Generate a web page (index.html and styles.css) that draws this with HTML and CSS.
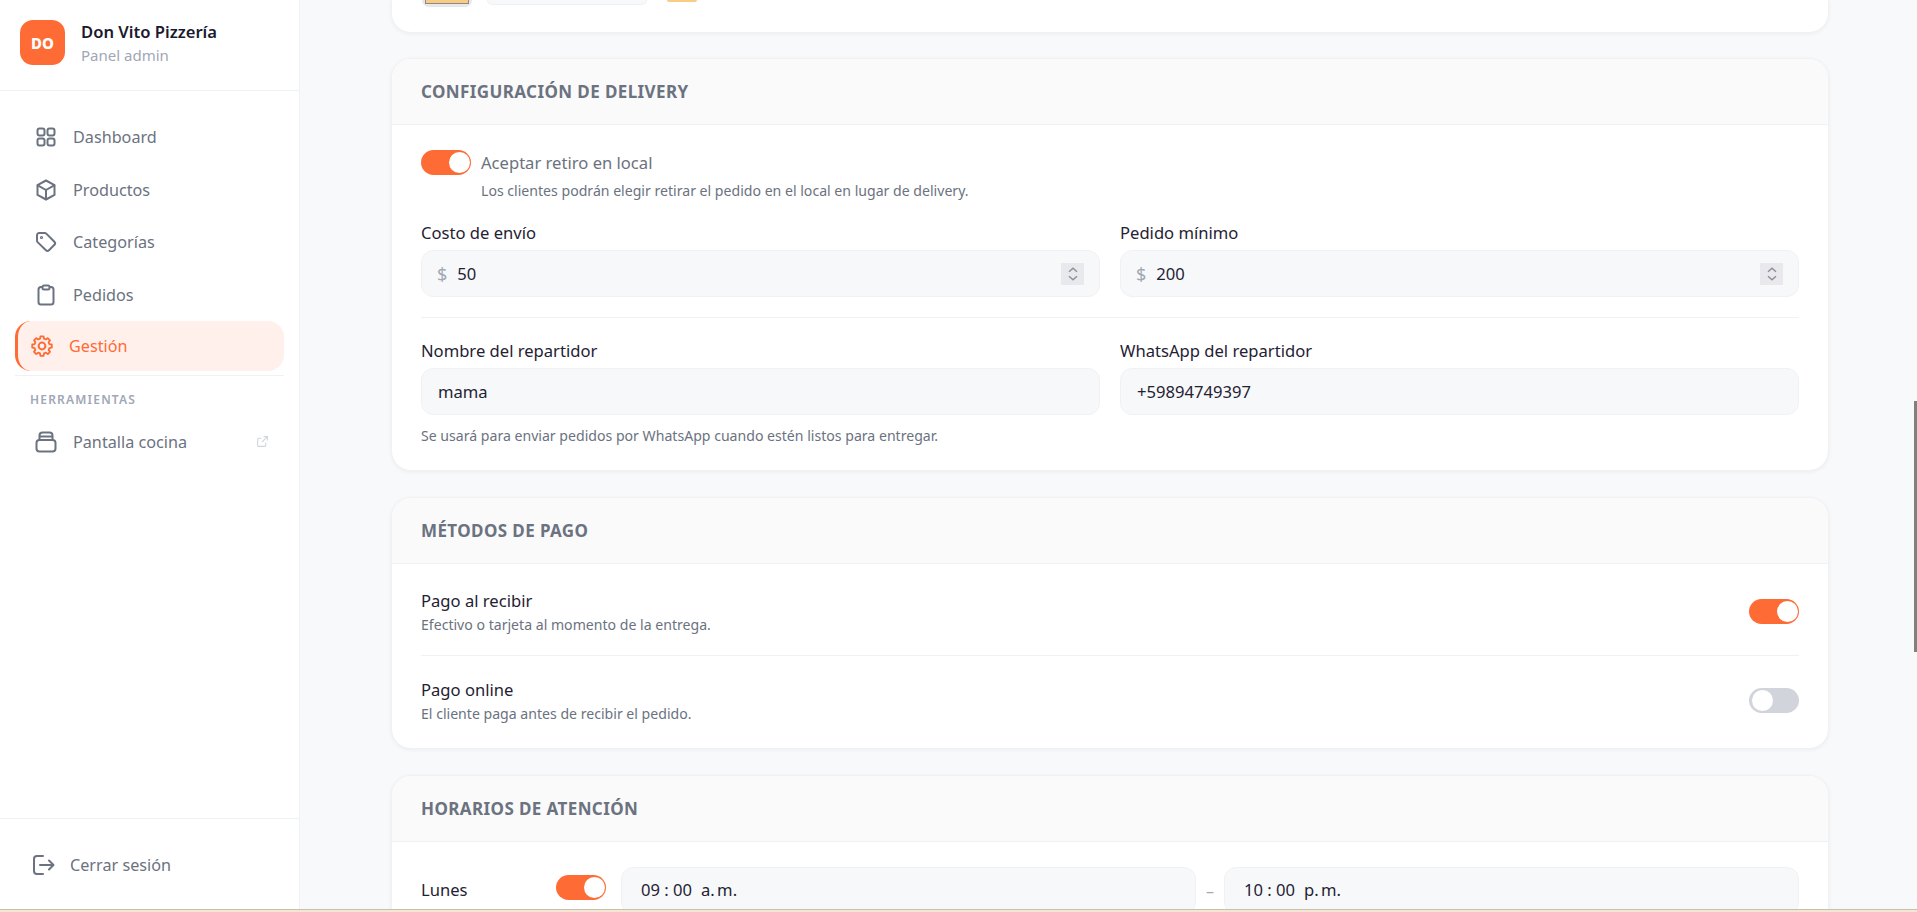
FILE: index.html
```html
<!DOCTYPE html>
<html lang="es">
<head>
  <meta charset="utf-8">
  <title>Gestión - Don Vito Pizzería</title>
  <link rel="stylesheet" href="styles.css">
</head>
<body>
<div class="app">
  <!-- Sidebar -->
  <aside class="sidebar">
    <div class="brand">
      <div class="brand-logo">DO</div>
      <div>
        <div class="brand-name">Don Vito Pizzería</div>
        <div class="brand-sub">Panel admin</div>
      </div>
    </div>
    <nav class="nav">
      <a class="nav-item">
        <svg class="nav-icon" viewBox="0 0 24 24"><rect x="3.5" y="3.500" width="7" height="7" rx="2"/><rect x="13.5" y="3.500" width="7" height="7" rx="2"/><rect x="3.5" y="13.500" width="7" height="7" rx="2"/><rect x="13.5" y="13.500" width="7" height="7" rx="2"/></svg>
        Dashboard
      </a>
      <a class="nav-item">
        <svg class="nav-icon" viewBox="0 0 24 24"><path d="M12 2.500l8.500 4.600v9.800L12 21.500l-8.500-4.600V7.100z"/><path d="M3.800 7.300L12 12l8.200-4.700M12 12v9.300"/></svg>
        Productos
      </a>
      <a class="nav-item">
        <svg class="nav-icon" viewBox="0 0 24 24"><path d="M3 5.200A2.200 2.200 0 0 1 5.200 3h5.600c.6 0 1.100.2 1.500.6l8.100 8.100a2.200 2.200 0 0 1 0 3.100l-5.400 5.400a2.200 2.200 0 0 1-3.100 0l-8.300-8.100A2.200 2.200 0 0 1 3 10.600z"/><circle cx="7.500" cy="7.500" r=".6"/></svg>
        Categorías
      </a>
      <a class="nav-item">
        <svg class="nav-icon" viewBox="0 0 24 24"><rect x="4.500" y="4" width="15" height="17.500" rx="2.500"/><rect x="8.500" y="2.500" width="7" height="4" rx="1.500" fill="#fff"/></svg>
        Pedidos
      </a>
      <a class="nav-item active">
        <svg class="nav-icon" viewBox="0 0 24 24"><path d="M10.300 3h3.400l.5 2.600 1.900.8 2.200-1.500 2.400 2.400-1.500 2.200.8 1.900 2.600.5v3.400l-2.600.5-.8 1.900 1.500 2.200-2.400 2.400-2.200-1.500-1.900.8-.5 2.600h-3.400l-.5-2.600-1.900-.8-2.200 1.500-2.400-2.400 1.500-2.200-.8-1.900-2.600-.5v-3.400l2.600-.5.8-1.900-1.500-2.200 2.400-2.400 2.200 1.500 1.900-.8z" transform="translate(12 12) scale(.92) translate(-12 -13.500)"/><circle cx="12" cy="12" r="3.400"/></svg>
        Gestión
      </a>
      <div class="nav-section">Herramientas</div>
      <a class="nav-item">
        <svg class="nav-icon" viewBox="0 0 24 24"><path d="M5.500 10V5.500a3 3 0 0 1 3-3h7a3 3 0 0 1 3 3V10"/><rect x="2.500" y="10" width="19" height="11.500" rx="3"/><path d="M6 6.500h12"/></svg>
        Pantalla cocina
        <svg class="ext-icon" viewBox="0 0 24 24"><path d="M18 14v5a2 2 0 0 1-2 2H5a2 2 0 0 1-2-2V8a2 2 0 0 1 2-2h5M14 3h7v7M21 3L11 13"/></svg>
      </a>
    </nav>
    <div class="sidebar-foot">
      <a class="logout">
        <svg class="nav-icon" viewBox="0 0 24 24"><path d="M12 3H6a3 3 0 0 0-3 3v12a3 3 0 0 0 3 3h6M9 12h13M18 7.500l4.500 4.500-4.500 4.500"/></svg>
        Cerrar sesión
      </a>
    </div>
  </aside>

  <main class="main">
    <!-- Logo card, scrolled out of view -->
    <section class="card card-cut">
      <div class="thumb"><div class="thumb-inner"></div></div>
      <div class="file-box"></div>
      <div class="swatch"></div>
    </section>

    <section class="card">
      <h2 class="card-head">Configuración de delivery</h2>
      <div class="card-body">
        <div class="switch-row">
          <span class="toggle on"></span>
          <span class="switch-label">Aceptar retiro en local</span>
        </div>
        <p class="switch-help">Los clientes podrán elegir retirar el pedido en el local en lugar de delivery.</p>
        <div class="form-grid">
          <div>
            <div class="label">Costo de envío</div>
            <div class="input"><span class="prefix">$</span>50
              <span class="stepper"><svg viewBox="0 0 14 14"><path d="M3.500 5L7 2l3.500 3M3.500 9L7 12l3.500-3"/></svg></span>
            </div>
          </div>
          <div>
            <div class="label">Pedido mínimo</div>
            <div class="input"><span class="prefix">$</span>200
              <span class="stepper"><svg viewBox="0 0 14 14"><path d="M3.500 5L7 2l3.500 3M3.500 9L7 12l3.500-3"/></svg></span>
            </div>
          </div>
        </div>
        <hr class="rule">
        <div class="form-grid">
          <div>
            <div class="label">Nombre del repartidor</div>
            <div class="input">mama</div>
          </div>
          <div>
            <div class="label">WhatsApp del repartidor</div>
            <div class="input">+59894749397</div>
          </div>
        </div>
        <p class="hint">Se usará para enviar pedidos por WhatsApp cuando estén listos para entregar.</p>
      </div>
    </section>

    <section class="card">
      <h2 class="card-head">Métodos de pago</h2>
      <div class="pay-list">
        <div class="pay-row">
          <div>
            <div class="pay-name">Pago al recibir</div>
            <div class="pay-desc">Efectivo o tarjeta al momento de la entrega.</div>
          </div>
          <span class="toggle on"></span>
        </div>
        <div class="pay-row">
          <div>
            <div class="pay-name">Pago online</div>
            <div class="pay-desc">El cliente paga antes de recibir el pedido.</div>
          </div>
          <span class="toggle"></span>
        </div>
      </div>
    </section>

    <section class="card">
      <h2 class="card-head">Horarios de atención</h2>
      <div class="hours-row">
        <span class="day">Lunes</span>
        <span class="toggle on"></span>
        <div class="input time">09 : 00 <span class="ampm">a. m.</span></div>
        <span class="dash">–</span>
        <div class="input time">10 : 00 <span class="ampm">p. m.</span></div>
      </div>
    </section>
  </main>
</div>
<div class="scroll-thumb"></div>
<div class="desk-strip"></div>
</body>
</html>
```

FILE: styles.css
```css
* {
  box-sizing: border-box;
}
html, body {
  height: 100%;
}
body {
  margin: 0;
  overflow: hidden;
  font-family: "Noto Sans", sans-serif;
  color: #1f2233;
  background: #f8f9fb;
}
.app {
  display: flex;
  height: 909px;
  overflow: hidden;
}

/* Sidebar */
.sidebar {
  width: 300px;
  flex: none;
  display: flex;
  flex-direction: column;
  background: #fff;
  border-right: 1px solid #f0f1f4;
}
.brand {
  height: 91px;
  flex: none;
  display: flex;
  align-items: center;
  gap: 16px;
  padding: 0 20px 5px;
  border-bottom: 1px solid #f0f1f4;
}
.brand-logo {
  width: 45px;
  height: 45px;
  display: flex;
  align-items: center;
  justify-content: center;
  border-radius: 13px;
  background: #ff6b35;
  color: #fff;
  font-size: 15px;
  font-weight: 800;
}
.brand-name {
  font-size: 16.6px;
  font-weight: 600;
  line-height: 22px;
  color: #1a1a2e;
}
.brand-sub {
  margin-top: 2px;
  font-size: 15px;
  line-height: 20px;
  color: #a0a7b5;
}
.nav {
  flex: 1;
  padding: 20px 15px 0;
}
.nav-item {
  height: 52.6px;
  display: flex;
  align-items: center;
  gap: 15px;
  padding-left: 19px;
  font-size: 16.2px;
  color: #6b7280;
}
.nav-icon {
  width: 24px;
  height: 24px;
  flex: none;
  fill: none;
  stroke: currentColor;
  stroke-width: 2;
  stroke-linecap: round;
  stroke-linejoin: round;
}
.nav-item.active {
  height: 50px;
  padding-left: 12px;
  border-left: 3px solid #ff6b35;
  border-radius: 16px;
  background: #fff0eb;
  color: #ff6b35;
}
.nav-section {
  margin-top: 4px;
  padding: 15px 0 0 15px;
  border-top: 1px solid #f0f1f4;
  font-size: 12px;
  font-weight: 600;
  line-height: 17px;
  letter-spacing: 1.2px;
  text-transform: uppercase;
  color: #a0a7b5;
}
.nav-section + .nav-item {
  margin-top: 7px;
}
.ext-icon {
  width: 13px;
  height: 13px;
  margin: 0 15px 0 auto;
  fill: none;
  stroke: #d1d5db;
  stroke-width: 2;
}
.sidebar-foot {
  height: 91px;
  flex: none;
  display: flex;
  align-items: center;
  padding: 2px 31px 0;
  border-top: 1px solid #f0f1f4;
}
.logout {
  display: flex;
  align-items: center;
  gap: 15px;
  font-size: 16.2px;
  color: #6b7280;
}

/* Main column */
.main {
  flex: 1;
  padding: 0 88px 0 91px;
}
.card {
  margin-bottom: 26px;
  background: #fff;
  border: 1px solid #f0f1f4;
  border-radius: 20px;
  box-shadow: 0 1px 4px rgba(0, 0, 0, 0.05);
  overflow: hidden;
}
.card-cut {
  height: 33px;
  margin-bottom: 25px;
  border-top: 0;
  border-radius: 0 0 20px 20px;
  display: flex;
  align-items: flex-start;
  padding-left: 30px;
}
.thumb {
  width: 50px;
  height: 7px;
  flex: none;
  padding: 0 2px 2px;
  border: 1px solid #e5e7eb;
  border-top: 0;
  border-radius: 0 0 7px 7px;
  background: #e8e9ee;
}
.thumb-inner {
  height: 4px;
  background: #f9cc85;
  border: 1px solid #8d8a83;
  border-top: 0;
}
.file-box {
  width: 160px;
  height: 5px;
  margin-left: 15px;
  background: #f7f8fa;
  border: 1px solid #f0f1f4;
  border-top: 0;
  border-radius: 0 0 10px 10px;
}
.swatch {
  width: 30px;
  height: 2px;
  margin-left: 20px;
  border-radius: 0 0 3px 3px;
  background: #f9cc85;
}
.card-head {
  height: 66px;
  margin: 0;
  padding: 0 29px;
  display: flex;
  align-items: center;
  background: #fafafb;
  border-bottom: 1px solid #f0f1f4;
  font-size: 17px;
  font-weight: 700;
  letter-spacing: 0.4px;
  text-transform: uppercase;
  color: #6b7280;
}
.card-body {
  padding: 25px 29px;
}

/* Toggles */
.toggle {
  position: relative;
  display: block;
  width: 50px;
  height: 25px;
  flex: none;
  border-radius: 13px;
  background: #d1d5db;
}
.toggle::after {
  content: "";
  position: absolute;
  top: 2px;
  left: 3px;
  width: 21px;
  height: 21px;
  border-radius: 50%;
  background: #fff;
}
.toggle.on {
  background: #ff6b35;
}
.toggle.on::after {
  left: 28px;
}
.switch-row {
  display: flex;
  align-items: center;
  gap: 10px;
}
.switch-label {
  font-size: 16.6px;
  color: #6b7280;
}
.switch-help {
  margin: 7px 0 0 60px;
  font-size: 14.1px;
  line-height: 18px;
  color: #6b7280;
}

/* Form fields */
.form-grid {
  display: grid;
  grid-template-columns: 1fr 1fr;
  gap: 20px;
  margin-top: 22px;
}
.label {
  margin-bottom: 6px;
  font-size: 16.6px;
  line-height: 22px;
  color: #1f2233;
}
.input {
  height: 47px;
  display: flex;
  align-items: center;
  padding: 0 15px 0 16px;
  background: #f7f8fa;
  border: 1px solid #f0f1f4;
  border-radius: 12px;
  font-size: 16.6px;
  color: #1f2233;
}
.prefix {
  margin: 0 10px 0 -1px;
  font-size: 18px;
  color: #a0a7b5;
}
.stepper {
  width: 23px;
  height: 22px;
  margin-left: auto;
  display: flex;
  align-items: center;
  justify-content: center;
  background: #e8e8ed;
}
.stepper svg {
  width: 16px;
  height: 18px;
  fill: none;
  stroke: #8f8f9a;
  stroke-width: 1.3;
}
.rule {
  height: 1px;
  margin: 20px 0 0;
  border: 0;
  background: #f0f1f4;
}
.hint {
  margin: 12px 0 0;
  font-size: 14.1px;
  line-height: 18px;
  color: #6b7280;
}

/* Payment methods */
.pay-list {
  padding: 0 29px;
}
.pay-row {
  height: 92px;
  padding-top: 4px;
  display: flex;
  align-items: center;
  justify-content: space-between;
  border-bottom: 1px solid #f0f1f4;
}
.pay-row:last-child {
  padding: 0 0 3px;
  border-bottom: 0;
}
.pay-name {
  font-size: 16.6px;
  line-height: 22px;
  color: #1f2233;
}
.pay-desc {
  margin-top: 4px;
  font-size: 14.1px;
  line-height: 18px;
  color: #6b7280;
}

/* Opening hours */
.hours-row {
  display: flex;
  align-items: center;
  padding: 25px 29px;
}
.day {
  width: 135px;
  flex: none;
  margin-top: -2px;
  font-size: 16.6px;
}
.time {
  flex: 1;
  padding: 0 19px 3px;
}
.ampm {
  margin-left: 9px;
  word-spacing: -2px;
}
.hours-row .toggle {
  margin: -6px 15px 0 0;
}
.dash {
  width: 28px;
  text-align: center;
  color: #a0a7b5;
}

/* Browser bits that sit over the page */
.scroll-thumb {
  position: absolute;
  top: 401px;
  right: 0;
  width: 3px;
  height: 251px;
  background: #808080;
}
.desk-strip {
  height: 3px;
  border-top: 1px solid #c9bfae;
  background: #f3e6d3;
}
```
